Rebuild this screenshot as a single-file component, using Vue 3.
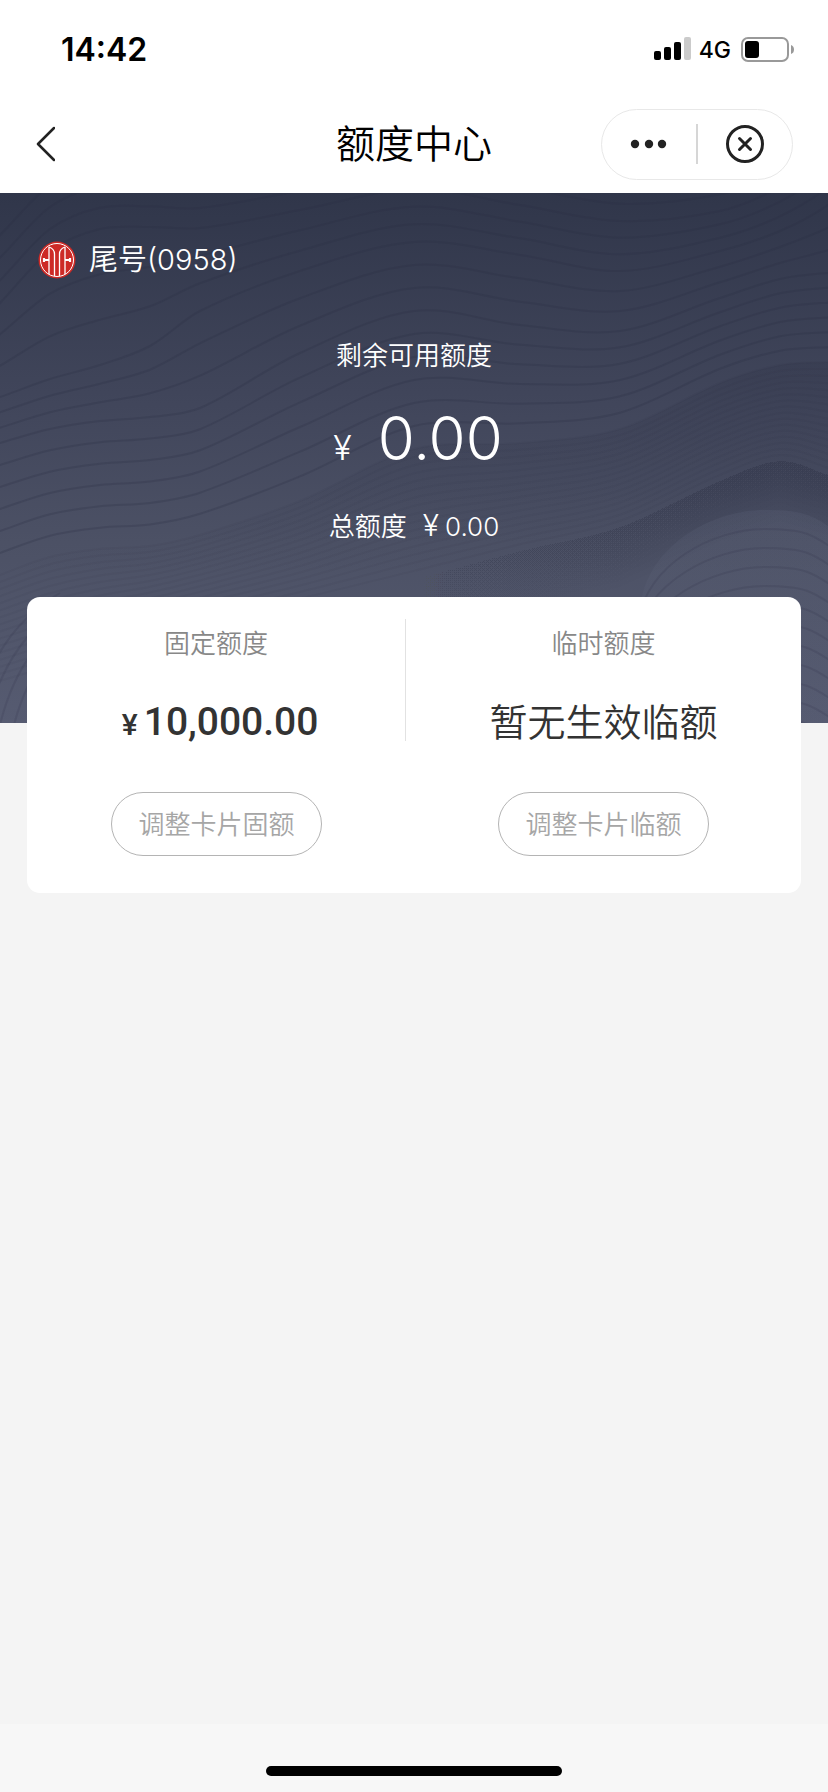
<script setup>
const tail = '0958'
const available = '0.00'
const total = '0.00'

// Contour lines of the hero backdrop: guide curves sampled at fixed x positions,
// with intermediate lines interpolated between neighbouring guides.
const xs = [-20, 0, 50, 100, 150, 200, 300, 414, 520, 620, 720, 780, 828, 850]
const crest = [130, 110, 58, 36, 34, 35, 17, -4, 12, 28, 18, -6, -40, -60]
const slope = [210, 204, 186, 172, 153, 118, 78, 49, 62, 78, 58, 38, 12, -10]
const valley = [256, 250, 236, 228, 224, 215, 160, 118, 132, 138, 105, 86, 80, 80]
const ridge = [390, 382, 364, 356, 353, 342, 308, 256, 250, 236, 190, 172, 169, 170]
const swell = [500, 495, 480, 462, 446, 433, 412, 386, 358, 334, 288, 268, 282, 292]

const mix = (a, b, t) => a.map((v, i) => v + (b[i] - v) * t)

function curve(ys) {
  const p = xs.map((x, i) => [x, ys[i]])
  let d = `M${p[0][0]} ${p[0][1].toFixed(1)}`
  for (let i = 0; i < p.length - 1; i++) {
    const a = p[Math.max(i - 1, 0)]
    const b = p[i]
    const c = p[i + 1]
    const e = p[Math.min(i + 2, p.length - 1)]
    const k = (c[0] - b[0]) / 3
    const s1 = (c[1] - a[1]) / (c[0] - a[0])
    const s2 = (e[1] - b[1]) / (e[0] - b[0])
    d += `C${(b[0] + k).toFixed(1)} ${(b[1] + k * s1).toFixed(1)} ${(c[0] - k).toFixed(1)} ${(c[1] - k * s2).toFixed(1)} ${c[0]} ${c[1].toFixed(1)}`
  }
  return d
}

function band(from, to, count) {
  return Array.from({ length: count }, (_, i) => curve(mix(from, to, i / count)))
}

const contours = [
  ...band(crest.map((y, i) => y - 70 + i * 2), crest, 3),
  ...band(crest, slope, 3),
  ...band(slope, valley, 3),
  ...band(valley, ridge, 6),
]
const fine = band(ridge, swell, 16)
const ridgeFill = curve(ridge) + 'V540H-20Z'
// Stacked strips that add up to a shadow fading downwards from the swell
const swellTop = curve(swell)
const swellShadow = Array.from({ length: 10 }, (_, i) => {
  const drop = (i + 1) * 6
  return `${swellTop}L850 ${292 + drop}` + xs.slice(0, -1).map((x, k) => `L${x} ${swell[k] + drop}`).reverse().join('') + 'Z'
})
const hill = Array.from({ length: 12 }, (_, i) => {
  const y = i * 19
  return `M${641 - i * 3} ${410 + y}C${650 - i * 2} ${350 + y} 715 ${317 + y} 764 ${317 + y}S815 ${325 + y} 850 ${348 + y}`
})
const corner = Array.from({ length: 5 }, (_, i) => `M${-30 + i * 14} 540Q${-10 + i * 14} ${440 + i * 4} ${60 + i * 14} ${400 + i * 6}`)

const limits = [
  { title: '固定额度', symbol: '¥', value: '10,000.00', action: '调整卡片固额' },
  { title: '临时额度', note: '暂无生效临额', action: '调整卡片临额' },
]
</script>

<template>
  <div class="page">
    <div class="status">
      <span class="time">14:42</span>
      <div class="indicators">
        <svg width="37" height="24" viewBox="0 0 37 24" aria-hidden="true">
          <rect x="0" y="14" width="7" height="9" rx="2" />
          <rect x="10" y="10" width="7" height="13" rx="2" />
          <rect x="20" y="5" width="7" height="18" rx="2" />
          <rect x="30" y="0" width="7" height="23" rx="2" fill="#cbcbcb" />
        </svg>
        <span class="network">4G</span>
        <svg width="53" height="25" viewBox="0 0 53 25" aria-hidden="true">
          <rect x="1" y="1" width="46" height="23" rx="6" fill="none" stroke="#999" stroke-width="2" />
          <rect x="4" y="4" width="14" height="17" rx="3" />
          <path d="M50 8Q53 9 53 12.500T50 17Z" fill="#999" />
        </svg>
      </div>
    </div>

    <header class="nav">
      <button class="back" type="button" aria-label="返回">
        <svg width="20" height="36" viewBox="0 0 20 36" fill="none" stroke="#222" stroke-width="2.500" stroke-linecap="round" stroke-linejoin="round"><path d="M19 2L3 18L19 34" /></svg>
      </button>
      <h1>额度中心</h1>
      <div class="capsule">
        <button type="button" aria-label="更多">
          <svg width="38" height="10" viewBox="0 0 38 10" fill="#222"><circle cx="5" cy="5" r="4.200" /><circle cx="19" cy="5" r="4.200" /><circle cx="32" cy="5" r="4.200" /></svg>
        </button>
        <span class="split"></span>
        <button type="button" aria-label="关闭">
          <svg width="40" height="40" viewBox="0 0 40 40" fill="none" stroke="#222" stroke-linecap="round"><circle cx="20" cy="20" r="17.500" stroke-width="3" /><path d="M14.500 14.500L25.500 25.500M25.500 14.500L14.500 25.500" stroke-width="3" /></svg>
        </button>
      </div>
    </header>

    <main>
      <section class="hero">
        <svg class="waves" viewBox="0 0 828 530" preserveAspectRatio="none" fill="none" aria-hidden="true">
          <defs>
            <linearGradient id="shade" gradientUnits="userSpaceOnUse" x1="0" y1="160" x2="0" y2="380">
              <stop offset="0" stop-color="#2c3044" stop-opacity=".24" />
              <stop offset="1" stop-color="#2c3044" stop-opacity="0" />
            </linearGradient>
            <linearGradient id="fold" gradientUnits="userSpaceOnUse" x1="380" y1="0" x2="740" y2="0">
              <stop offset="0" stop-color="#2c3044" stop-opacity="0" />
              <stop offset="1" stop-color="#2c3044" stop-opacity=".04" />
            </linearGradient>
            <linearGradient id="glow" x1="0" y1="0" x2="0" y2="1">
              <stop offset="0" stop-color="#6a7188" stop-opacity=".16" />
              <stop offset="1" stop-color="#6a7188" stop-opacity="0" />
            </linearGradient>
          </defs>
          <path :d="ridgeFill" fill="url(#shade)" />
          <path v-for="(d, i) in contours" :key="'c' + i" :d="d" class="contour" />
          <path v-for="(d, i) in fine" :key="'f' + i" :d="d" class="fine" />
          <path v-for="(d, i) in swellShadow" :key="'s' + i" :d="d" fill="url(#fold)" />
          <path :d="hill[0] + 'V540H641Z'" fill="url(#glow)" />
          <path v-for="(d, i) in hill.slice(1)" :key="'h' + i" :d="d" class="soft" />
          <path v-for="(d, i) in corner" :key="'k' + i" :d="d" class="soft" />
        </svg>

        <div class="account">
          <svg width="38" height="38" viewBox="0 0 38 38" aria-hidden="true">
            <circle cx="19" cy="19" r="18.500" fill="#cd2a26" />
            <g fill="none" stroke="#fff">
              <circle cx="19" cy="19" r="16.500" stroke-width="1" />
              <path d="M11 6Q16.500 8 16.500 13V35M27 6Q21.500 8 21.500 13V35" stroke-width="1.300" />
              <path d="M11 6V33M27 6V33" stroke-width="1.300" />
            </g>
            <path d="M6 17V21M6 19H11M32 17V21M32 19H27" fill="none" stroke="#fff" stroke-width="2.200" />
          </svg>
          <span>尾号({{ tail }})</span>
        </div>
        <p class="caption">剩余可用额度</p>
        <p class="available"><span class="yen">¥</span><span>{{ available }}</span></p>
        <p class="total"><span>总额度</span><span class="sum"><span class="sign">¥</span>{{ total }}</span></p>
      </section>

      <section class="card">
        <div v-for="item in limits" :key="item.title" class="limit">
          <div class="detail">
            <h2>{{ item.title }}</h2>
            <p v-if="item.value" class="amount"><span>{{ item.symbol }}</span>{{ item.value }}</p>
            <p v-else class="note">{{ item.note }}</p>
          </div>
          <button type="button">{{ item.action }}</button>
        </div>
      </section>
    </main>

    <footer class="home"><span></span></footer>
  </div>
</template>

<style>
body {
  margin: 0;
  background: #f4f4f4;
}
</style>

<style scoped>
.page {
  display: flex;
  flex-direction: column;
  min-height: 100vh;
  background: #f4f4f4;
  color: #333;
  font-family: Inter, "Noto Sans CJK SC", sans-serif;
  font-weight: 350;
}
h1, h2, p {
  margin: 0;
  font-weight: inherit;
}
button {
  padding: 0;
  border: 0;
  background: none;
  color: inherit;
  font: inherit;
  cursor: pointer;
}
svg {
  display: block;
  flex: none;
}
.status {
  display: flex;
  align-items: center;
  justify-content: space-between;
  box-sizing: border-box;
  height: 100px;
  padding: 0 34px 2px 61px;
  background: #fff;
  color: #000;
}
.time {
  font-size: 32px;
  font-weight: 600;
}
.indicators {
  display: flex;
  align-items: center;
}
.network {
  margin: 0 10px 0 8px;
  padding-top: 2px;
  font-size: 23px;
  font-weight: 500;
}
.nav {
  display: grid;
  grid-template-columns: 1fr auto 1fr;
  align-items: center;
  box-sizing: border-box;
  height: 93px;
  padding: 0 35px 5px;
  background: #fff;
  color: #000;
}
.back {
  justify-self: start;
}
h1 {
  font-size: 39px;
  line-height: 56px;
}
.capsule {
  display: flex;
  align-items: center;
  justify-self: end;
  box-sizing: border-box;
  width: 192px;
  height: 71px;
  border: 1px solid #e8e8e8;
  border-radius: 36px;
}
.capsule button {
  display: flex;
  flex: 1;
  justify-content: center;
}
.split {
  width: 2px;
  height: 40px;
  background: #d6d6d6;
}
.hero {
  position: relative;
  box-sizing: border-box;
  min-height: 530px;
  padding: 46px 38px 160px;
  background: linear-gradient(#30364a, #41465b 40%, #4c5165 66%, #565b71);
  color: #fff;
  text-align: center;
}
.waves {
  position: absolute;
  inset: 0;
  width: 100%;
  height: 100%;
}
.contour, .soft, .fine {
  stroke: #2b2e42;
  stroke-width: 2;
}
.contour {
  stroke-opacity: .24;
}
.soft {
  stroke-opacity: .16;
}
.fine {
  stroke-opacity: .05;
}
.account, .caption, .available, .total {
  position: relative;
}
.account {
  display: flex;
  align-items: center;
  gap: 13px;
  height: 42px;
  font-size: 29px;
  line-height: 38px;
}
.caption {
  margin-top: 55px;
  font-size: 26px;
  line-height: 40px;
}
.available {
  display: flex;
  align-items: baseline;
  justify-content: center;
  gap: 26px;
  margin-top: 24px;
  padding-left: 8px;
  font-size: 60px;
  line-height: 76px;
}
.yen {
  font-size: 34px;
}
.total {
  display: flex;
  align-items: baseline;
  justify-content: center;
  gap: 16px;
  margin-top: 19px;
  font-size: 26px;
  line-height: 40px;
}
.sum {
  display: flex;
  align-items: baseline;
  gap: 6px;
}
.sign {
  font-size: 30px;
}
.card {
  position: relative;
  display: grid;
  grid-template-columns: 49fr 51fr;
  box-sizing: border-box;
  margin: -126px 27px 0;
  padding: 22px 0 37px;
  border-radius: 13px;
  background: #fff;
}
.limit {
  display: flex;
  flex-direction: column;
  align-items: center;
  gap: 51px;
}
.detail {
  box-sizing: border-box;
  width: 100%;
  height: 122px;
  text-align: center;
}
.limit:first-child .detail {
  border-right: 1px solid #e2e2e2;
}
h2 {
  color: #888;
  font-size: 26px;
  line-height: 50px;
}
.amount, .note {
  margin-top: 25px;
  line-height: 56px;
}
.amount {
  display: flex;
  align-items: baseline;
  justify-content: center;
  gap: 6px;
  padding-left: 8px;
  font-family: Roboto, sans-serif;
  font-size: 39px;
  font-weight: 500;
}
.amount span {
  font-size: 30px;
}
.note {
  font-size: 38px;
}
.limit button {
  box-sizing: border-box;
  width: 211px;
  height: 64px;
  padding-bottom: 3px;
  border: 1px solid #b4b4b4;
  border-radius: 32px;
  color: #a6a6a6;
  font-size: 26px;
}
.home {
  display: flex;
  align-items: flex-end;
  justify-content: center;
  box-sizing: border-box;
  height: 68px;
  margin-top: auto;
  padding-bottom: 16px;
  background: #f7f7f7;
}
.home span {
  width: 296px;
  height: 10px;
  border-radius: 5px;
  background: #000;
}
</style>
